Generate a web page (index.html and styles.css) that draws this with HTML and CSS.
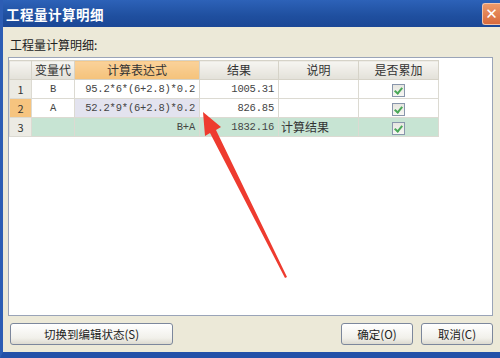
FILE: index.html
```html
<!DOCTYPE html>
<html lang="zh-CN">

<head>
    <meta charset="UTF-8">
    <meta name="viewport" content="width=device-width, initial-scale=1.0">
    <title>工程量计算明细</title>
    <link rel="stylesheet" href="styles.css">
</head>

<body>

    <div class="window">
        <div class="title-bar">
            <span class="title-text">工程量计算明细</span>
            <span class="close-btn">✕</span>
        </div>

        <div class="content">
            <p class="label">工程量计算明细:</p>

            <div class="grid-box">
                <table class="calc-table">
                    <colgroup>
                        <col style="width: 22px">
                        <col style="width: 43px">
                        <col style="width: 125px">
                        <col style="width: 79px">
                        <col style="width: 80px">
                        <col style="width: 80px">
                    </colgroup>
                    <thead>
                        <tr>
                            <th class="rownum"></th>
                            <th>变量代</th>
                            <th class="active">计算表达式</th>
                            <th>结果</th>
                            <th>说明</th>
                            <th>是否累加</th>
                        </tr>
                    </thead>
                    <tbody>
                        <tr>
                            <td class="rownum">1</td>
                            <td class="mono center">B</td>
                            <td class="mono right">95.2*6*(6+2.8)*0.2</td>
                            <td class="mono right">1005.31</td>
                            <td></td>
                            <td class="center"><span class="chk"></span></td>
                        </tr>
                        <tr>
                            <td class="rownum current">2</td>
                            <td class="mono center">A</td>
                            <td class="mono right selected">52.2*9*(6+2.8)*0.2</td>
                            <td class="mono right">826.85</td>
                            <td></td>
                            <td class="center"><span class="chk"></span></td>
                        </tr>
                        <tr class="total">
                            <td class="rownum">3</td>
                            <td></td>
                            <td class="mono right">B+A</td>
                            <td class="mono right">1832.16</td>
                            <td class="note">计算结果</td>
                            <td class="center"><span class="chk"></span></td>
                        </tr>
                    </tbody>
                </table>
            </div>

            <div class="button-row">
                <button type="button" class="xp-btn wide">切换到编辑状态(<u>S</u>)</button>
                <div class="df">
                    <button type="button" class="xp-btn">确定(<u>O</u>)</button>
                    <button type="button" class="xp-btn">取消(<u>C</u>)</button>
                </div>
            </div>
        </div>

        <!-- red annotation arrow drawn over the dialog -->
        <svg class="arrow" width="500" height="358" viewBox="0 0 500 358">
            <polygon points="203,112 221,127 216,130 287,277 285,278 210,133 205,136" fill="#ee3b2f" />
        </svg>
    </div>

</body>

</html>
```

FILE: styles.css
```css
body {
    margin: 0;
    font-family: "Noto Sans CJK SC", "DejaVu Sans", sans-serif;
    background-color: #ece9d8;
}

.window {
    position: relative;
    width: 500px;
    height: 358px;
    box-sizing: border-box;
    background-color: #ece9d8;
    border-left: 3px solid #2c5db4;
    border-bottom: 6px solid #2250a8;
    display: flex;
    flex-direction: column;
    overflow: hidden;
}

.title-bar {
    height: 27px;
    flex-shrink: 0;
    margin-left: -3px;
    background: linear-gradient(#2d62b8, #1f4f9f 60%, #1b4796);
    display: flex;
    align-items: center;
    justify-content: space-between;
}

.title-text {
    color: #fff;
    font-size: 13.5px;
    font-weight: bold;
    padding-left: 6px;
    letter-spacing: 0.5px;
}

.close-btn {
    width: 17px;
    height: 20px;
    margin-top: 1px;
    border-radius: 3px 0 0 3px;
    background: linear-gradient(#ec9a6a, #d86a3c);
    border: 1px solid #f3c3a8;
    border-right: none;
    color: #fff;
    font-size: 15px;
    line-height: 20px;
    text-align: center;
    font-family: "DejaVu Sans", sans-serif;
}

.content {
    flex: 1;
    display: flex;
    flex-direction: column;
    padding: 0 7px 0 5px;
}

.label {
    margin: 0;
    padding: 11px 0 5px 2px;
    font-size: 12px;
    line-height: 14px;
    color: #222;
}

.grid-box {
    height: 255px;
    background-color: #fff;
    border: 1px solid #9aa4b8;
    padding: 2px 0 0 0;
}

.calc-table {
    border-collapse: collapse;
    table-layout: fixed;
    width: 429px;
    font-size: 12px;
    color: #333;
}

.calc-table th {
    height: 18px;
    font-weight: normal;
    background: linear-gradient(#f6f5f1, #e3e1d9);
    border: 1px solid #d6d3c8;
    padding: 0;
    line-height: 18px;
    color: #333;
}

.calc-table th.active {
    background: linear-gradient(#fad29a, #f5c27a);
}

.calc-table td {
    height: 18px;
    border: 1px solid #dcdad2;
    padding: 0 4px;
    line-height: 18px;
    white-space: nowrap;
    overflow: hidden;
}

.calc-table .rownum {
    background-color: #ecebe4;
    text-align: center;
    font-size: 11px;
    padding: 0;
    color: #333;
}

.calc-table .rownum.current {
    background-color: #f6c47f;
}

.mono {
    font-family: "Liberation Mono", "Noto Sans CJK SC", monospace;
    font-size: 10.5px;
    letter-spacing: -0.2px;
    color: #444;
}

.center {
    text-align: center;
}

.right {
    text-align: right;
}

.calc-table td.selected {
    background-color: #e3e3ef;
}

.total td {
    background-color: #c7e4d3;
}

.calc-table .note {
    padding: 0 2px;
    font-size: 12px;
}

.chk {
    position: relative;
    display: inline-block;
    width: 11px;
    height: 11px;
    vertical-align: middle;
    border: 1px solid #8996ac;
    background: linear-gradient(#e6e6e0, #f7f7f4);
}

.chk::after {
    content: "";
    position: absolute;
    left: 3px;
    top: 1px;
    width: 3px;
    height: 6px;
    border-right: 2px solid #4aa858;
    border-bottom: 2px solid #4aa858;
    transform: rotate(40deg);
}

.button-row {
    display: flex;
    justify-content: space-between;
    margin-top: 7px;
    padding-left: 2px;
}

.df {
    display: flex;
    gap: 8px;
}

.xp-btn {
    height: 22px;
    width: 72px;
    padding: 0;
    border: 1px solid #7c879c;
    border-radius: 3px;
    background: linear-gradient(#ffffff, #f1f0ea 70%, #dcdad0);
    font-family: "Noto Sans CJK SC", "DejaVu Sans", sans-serif;
    font-size: 11.5px;
    color: #222;
}

.xp-btn.wide {
    width: 163px;
}

.xp-btn u {
    text-decoration: none;
}

.arrow {
    position: absolute;
    left: -3px;
    top: 0;
    pointer-events: none;
}
```
